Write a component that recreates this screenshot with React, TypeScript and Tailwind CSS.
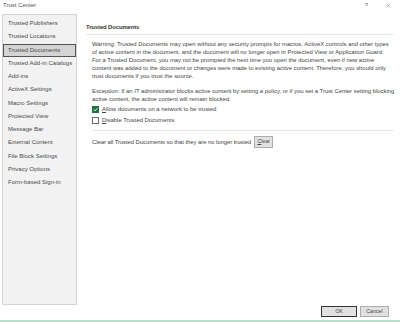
import React from "react";
import { X } from "lucide-react";

const navItems = [
  "Trusted Publishers",
  "Trusted Locations",
  "Trusted Documents",
  "Trusted Add-in Catalogs",
  "Add-ins",
  "ActiveX Settings",
  "Macro Settings",
  "Protected View",
  "Message Bar",
  "External Content",
  "File Block Settings",
  "Privacy Options",
  "Form-based Sign-in",
];

const warningLines = [
  "Warning: Trusted Documents may open without any security prompts for macros, ActiveX controls and other types",
  "of active content in the document, and the document will no longer open in Protected View or Application Guard.",
  "For a Trusted Document, you may not be prompted the next time you open the document, even if new active",
  "content was added to the document or changes were made to existing active content. Therefore, you should only",
  "trust documents if you trust the source.",
];

const exceptionLines = [
  "Exception: If an IT administrator blocks active content by setting a policy, or if you set a Trust Center setting blocking",
  "active content, the active content will remain blocked.",
];

const Checkbox: React.FC<{ checked: boolean }> = ({ checked }) =>
  checked ? (
    <span className="w-[7px] h-[7px] bg-[#217346] flex items-center justify-center">
      <svg width="5" height="5" viewBox="0 0 10 10">
        <path d="M1.5 5.2 L4 7.5 L8.5 2.5" stroke="white" strokeWidth="1.8" fill="none" />
      </svg>
    </span>
  ) : (
    <span className="w-[7px] h-[7px] bg-white border border-[#6a6a6a]" />
  );

const App: React.FC = () => {
  return (
    <div
      className="w-[400px] h-[322px] bg-white flex flex-col text-[#444] overflow-hidden"
      style={{ fontFamily: '"Liberation Sans", Arial, sans-serif' }}
    >
      {/* Title bar */}
      <div className="h-[14px] flex items-start justify-between pl-[3px] pr-[8px] pt-[1px] text-[6px] leading-[8px]">
        <span className="text-[#555]">Trust Center</span>
        <div className="flex items-center gap-[17px] text-[#666]">
          <span>?</span>
          <X className="w-[7px] h-[7px]" strokeWidth={1.5} />
        </div>
      </div>

      {/* Body */}
      <div className="flex pl-[2px]">
        {/* Nav */}
        <div className="w-[75px] h-[291px] shrink-0 bg-[#f2f2f2] border border-[#d4d4d4] pt-[2px] text-[6px] text-[#4a4a4a]">
          {navItems.map((item) => (
            <div
              key={item}
              className={`h-[13.25px] flex items-center whitespace-nowrap ${
                item === "Trusted Documents"
                  ? "bg-[#d4d4d4] border border-[#555] pl-[4px]"
                  : "pl-[5px]"
              }`}
            >
              {item}
            </div>
          ))}
        </div>

        {/* Main */}
        <div className="flex-1 pl-[9px] pr-[8px] text-[5.9px]">
          <div className="mt-[9px] leading-[8px] font-bold text-[5.9px] tracking-[-0.1px] text-[#333]">
            Trusted Documents
          </div>
          <div className="mt-[3px] h-px bg-[#e8e8e8]" />

          <div className="pl-[6px]">
            <div className="mt-[5px] leading-[8px]">
              {warningLines.map((l) => (
                <div key={l} className="whitespace-nowrap">
                  {l}
                </div>
              ))}
            </div>

            <div className="mt-[7px] leading-[8px]">
              {exceptionLines.map((l) => (
                <div key={l} className="whitespace-nowrap">
                  {l}
                </div>
              ))}
            </div>

            <div className="mt-[1px]">
              <div className="h-[11px] flex items-center gap-[3px]">
                <Checkbox checked />
                <span>
                  <span className="underline">A</span>llow documents on a network to be trusted
                </span>
              </div>
              <div className="h-[11px] flex items-center gap-[3px]">
                <Checkbox checked={false} />
                <span>
                  <span className="underline">D</span>isable Trusted Documents
                </span>
              </div>
            </div>

            <div className="mt-[4px] h-px bg-[#e8e8e8]" />

            <div className="mt-[5px] h-[12px] flex items-center gap-[3px]">
              <span className="tracking-[-0.05px]">Clear all Trusted Documents so that they are no longer trusted</span>
              <button className="w-[19px] h-[12px] bg-[#e1e1e1] border border-[#adadad] text-[5.3px] leading-none text-[#444]">
                <span className="underline">C</span>lear
              </button>
            </div>
          </div>
        </div>
      </div>

      {/* Footer */}
      <div className="mt-[1px] h-[11px] flex justify-end gap-[3px] pr-[11px] text-[5.3px] text-[#444]">
        <button className="w-[36px] h-[11px] bg-[#e1e1e1] border border-[#333] leading-none">OK</button>
        <button className="w-[29px] h-[11px] bg-[#e1e1e1] border border-[#adadad] leading-none">Cancel</button>
      </div>

      <div className="mt-[3px] h-[2px] bg-[#b7dcc8]" />
    </div>
  );
};

export default App;
